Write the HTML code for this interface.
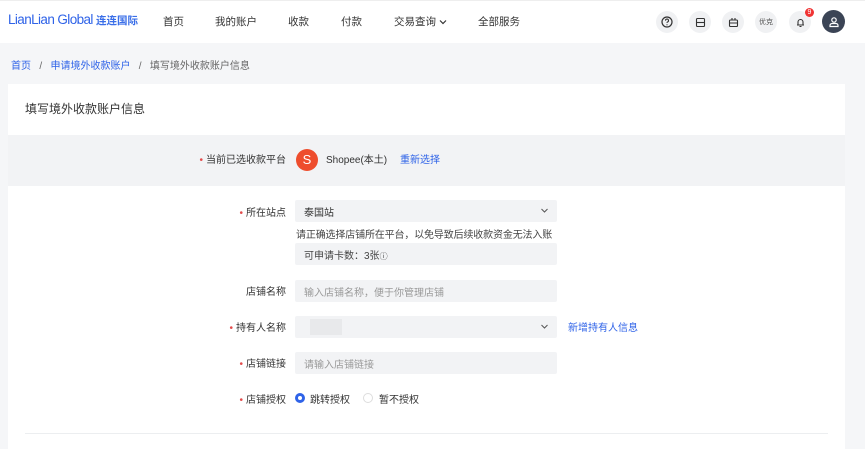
<!DOCTYPE html>
<html><head><meta charset="utf-8"><style>
*{box-sizing:border-box;margin:0;padding:0}
body{width:865px;height:449px;overflow:hidden;background:#f5f6f8;font-family:"Liberation Sans","Noto Sans CJK SC",sans-serif;font-size:10px;color:#333;position:relative}
.abs{position:absolute}
.top{left:0;top:0;width:865px;height:43px;background:#fff;border-top:1px solid #eee}
.nav{top:14px;font-size:10.5px;color:#333}
.ic{top:11px;width:22px;height:22px;border-radius:50%;background:#f0f1f3;display:flex;align-items:center;justify-content:center}
.card{left:8px;top:84px;width:837px;height:365px;background:#fff}
.band{left:8px;top:135px;width:837px;height:51px;background:#f2f3f5}
.lbl{width:110px;text-align:right;font-size:10px;color:#333}
.lbl i{color:#e34d4d;font-style:normal;margin-right:3px}
.inp{left:295px;width:262px;height:22px;background:#f2f3f5;border-radius:2px;font-size:10px;color:#999;padding:4px 9px 0}
.chev{position:absolute;right:8px;top:6px}
.blue{color:#2f63e8}
</style></head><body>
<div class="abs top"></div>
<div class="abs" style="left:8px;top:12px;font-size:13.5px;color:#2f63e8;letter-spacing:-0.6px;font-weight:300">LianLian Global <span style="font-size:10.5px;font-weight:bold;letter-spacing:0;color:#3a6ee8">连连国际</span></div>
<div class="abs nav" style="left:163px">首页</div>
<div class="abs nav" style="left:215px">我的账户</div>
<div class="abs nav" style="left:288px">收款</div>
<div class="abs nav" style="left:341px">付款</div>
<div class="abs nav" style="left:394px">交易查询 <svg width="8" height="6" viewBox="0 0 8 6"><path d="M1 1.5l3 3 3-3" stroke="#333" stroke-width="1.2" fill="none"/></svg></div>
<div class="abs nav" style="left:478px">全部服务</div>
<div class="abs ic" style="left:656px"><svg width="12" height="12" viewBox="0 0 12 12"><circle cx="6" cy="6" r="5" stroke="#333" stroke-width="1.2" fill="none"/><path d="M4.5 4.6a1.5 1.5 0 1 1 2 1.4c-.4.2-.5.5-.5.9" stroke="#333" stroke-width="1.1" fill="none"/><circle cx="6" cy="8.8" r=".6" fill="#333"/></svg></div>
<div class="abs ic" style="left:689px"><svg width="11" height="11" viewBox="0 0 11 11"><rect x="1.5" y="1.5" width="8" height="8" rx="1" stroke="#333" stroke-width="1.1" fill="none"/><path d="M1.5 5.5h8" stroke="#333" stroke-width="1.1"/></svg></div>
<div class="abs ic" style="left:722px"><svg width="11" height="11" viewBox="0 0 11 11"><rect x="1.5" y="3" width="8" height="6.5" rx="1" stroke="#333" stroke-width="1.1" fill="none"/><path d="M1.5 6h8M4 1v2M7 1v2" stroke="#333" stroke-width="1.1"/></svg></div>
<div class="abs ic" style="left:755px;font-size:7px;color:#555">优克</div>
<div class="abs ic" style="left:789px"><svg width="11" height="11" viewBox="0 0 11 11"><path d="M3 8V5a2.5 2.5 0 0 1 5 0v3h1M2 8h7M4.5 9.5h2" stroke="#333" stroke-width="1.1" fill="none"/></svg></div>
<div class="abs" style="left:805px;top:8px;width:9px;height:9px;border-radius:50%;background:#f03434;color:#fff;font-size:7px;text-align:center;line-height:9px">9</div>
<div class="abs" style="left:822px;top:10px;width:23px;height:23px;border-radius:50%;background:#3b4455;display:flex;align-items:center;justify-content:center"><svg width="12" height="12" viewBox="0 0 12 12"><circle cx="6" cy="4" r="2.2" stroke="#fff" stroke-width="1.2" fill="none"/><path d="M2 10.5v-1a2 2 0 0 1 2-2h4a2 2 0 0 1 2 2v1z" stroke="#fff" stroke-width="1.2" fill="none"/></svg></div>

<div class="abs" style="left:11px;top:57px;font-size:10px;color:#666"><span class="blue">首页</span>&nbsp;&nbsp; / &nbsp;&nbsp;<span class="blue">申请境外收款账户</span>&nbsp;&nbsp; / &nbsp;&nbsp;填写境外收款账户信息</div>

<div class="abs card"></div>
<div class="abs" style="left:25px;top:100px;font-size:12px;color:#333">填写境外收款账户信息</div>
<div class="abs band"></div>
<div class="abs lbl" style="left:176px;top:151px"><i>•</i>当前已选收款平台</div>
<div class="abs" style="left:296px;top:149px;width:22px;height:22px;border-radius:50%;background:#ee4d2d;color:#fff;font-size:13px;text-align:center;line-height:22px">S</div>
<div class="abs" style="left:326px;top:151px">Shopee(本土)</div>
<div class="abs blue" style="left:400px;top:151px">重新选择</div>

<div class="abs lbl" style="left:176px;top:204px"><i>•</i>所在站点</div>
<div class="abs inp" style="top:200px;color:#333">泰国站<svg class="chev" width="9" height="9" viewBox="0 0 9 9"><path d="M1.5 3l3 3 3-3" stroke="#555" stroke-width="1" fill="none"/></svg></div>
<div class="abs" style="left:296px;top:226px;color:#444;letter-spacing:-0.15px">请正确选择店铺所在平台，以免导致后续收款资金无法入账</div>
<div class="abs inp" style="top:243px;color:#444">可申请卡数：3张<span style="font-size:8px">ⓘ</span></div>

<div class="abs lbl" style="left:176px;top:283px">店铺名称</div>
<div class="abs inp" style="top:280px">输入店铺名称，便于你管理店铺</div>

<div class="abs lbl" style="left:176px;top:319px"><i>•</i>持有人名称</div>
<div class="abs inp" style="top:316px"><div style="position:absolute;left:15px;top:3px;width:32px;height:16px;background:#e8e9eb"></div><svg class="chev" width="9" height="9" viewBox="0 0 9 9"><path d="M1.5 3l3 3 3-3" stroke="#555" stroke-width="1" fill="none"/></svg></div>
<div class="abs blue" style="left:568px;top:319px">新增持有人信息</div>

<div class="abs lbl" style="left:176px;top:355px"><i>•</i>店铺链接</div>
<div class="abs inp" style="top:352px">请输入店铺链接</div>

<div class="abs lbl" style="left:176px;top:391px"><i>•</i>店铺授权</div>
<div class="abs" style="left:295px;top:393px;width:10px;height:10px;border-radius:50%;border:3px solid #2f63e8"></div>
<div class="abs" style="left:310px;top:391px">跳转授权</div>
<div class="abs" style="left:363px;top:393px;width:10px;height:10px;border-radius:50%;border:1px solid #ddd"></div>
<div class="abs" style="left:379px;top:391px">暂不授权</div>

<div class="abs" style="left:25px;top:433px;width:803px;height:1px;background:#eceef0"></div>
</body></html>
